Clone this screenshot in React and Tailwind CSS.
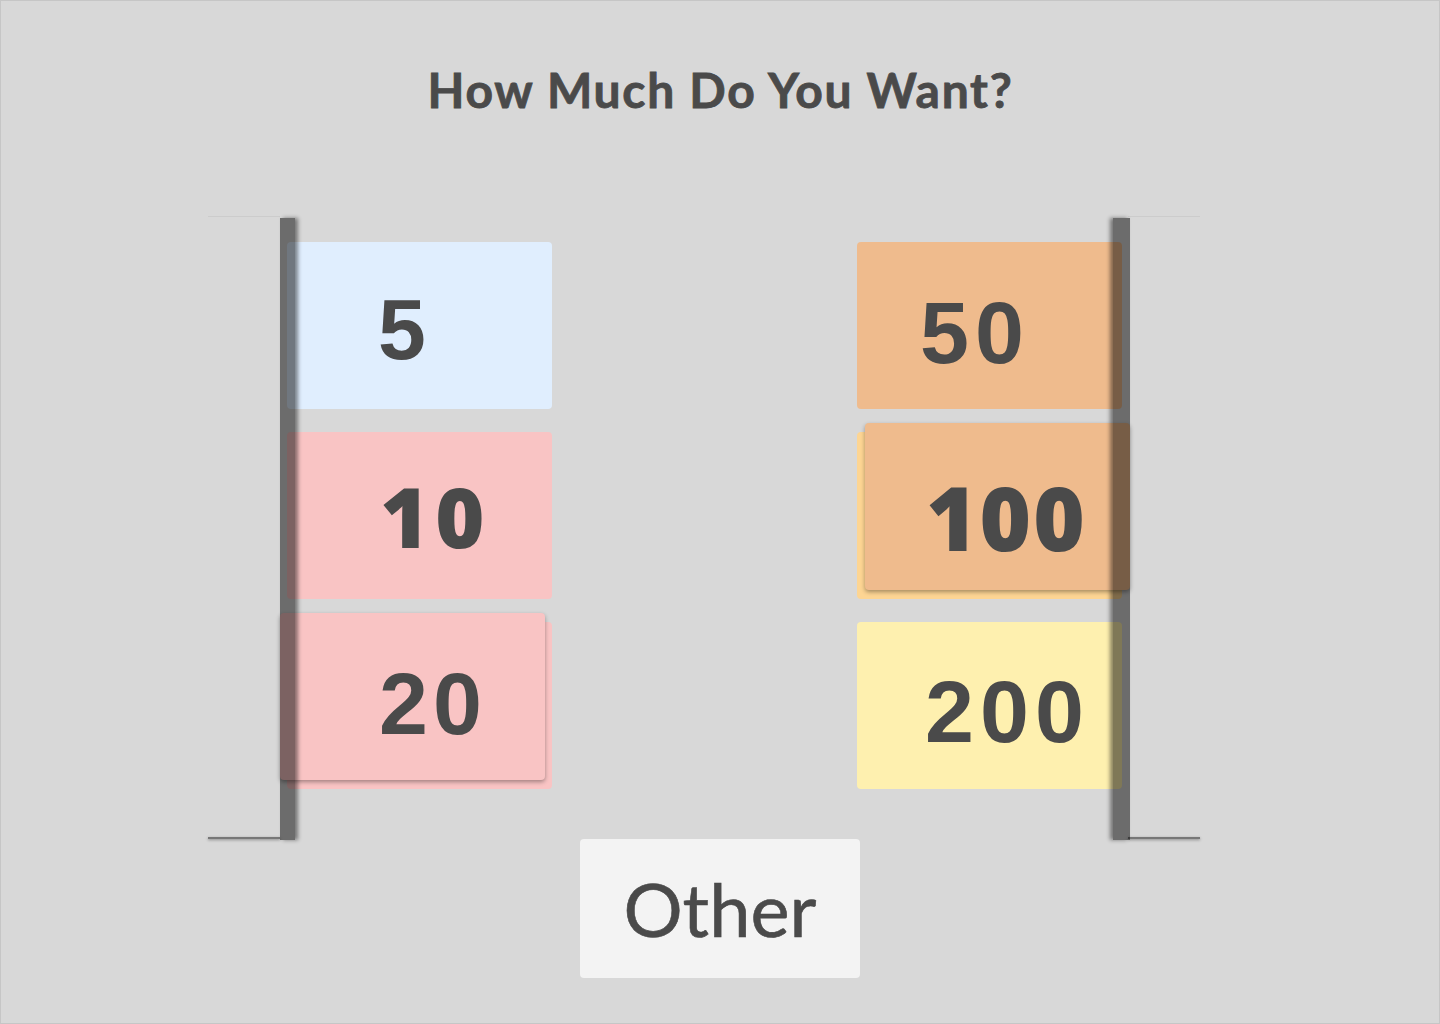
import React from "react";

const arial = { fontFamily: "'Liberation Sans', Arial, sans-serif" };
const open = { fontFamily: "'Open Sans', 'Noto Sans', sans-serif" };

const Card = ({ label, bg, textClass, lifted, backBg, liftClass, font }) => {
  const text = (
    <span className={`leading-none text-[#4a4a4a] ${textClass}`} style={font}>
      {label}
    </span>
  );
  if (!lifted) {
    return <div className={`flex h-[167px] w-[265px] items-center rounded-[4px] ${bg}`}>{text}</div>;
  }
  return (
    <div className={`relative h-[167px] w-[265px] rounded-[4px] ${backBg}`}>
      <div
        className={`absolute flex h-[167px] w-[265px] items-center rounded-[4px] ${bg} ${liftClass} shadow-[0_2px_4px_rgba(0,0,0,0.35)]`}
      >
        {text}
      </div>
    </div>
  );
};

const Rack = ({ side, children }) => {
  const left = side === "left";
  return (
    <div className={`relative h-[624px] ${left ? "w-[344px]" : "w-[343px]"}`}>
      {/* shelf lines */}
      <div className={`absolute top-0 h-px w-[72px] bg-[#cccccc] ${left ? "left-0" : "right-0"}`} />
      <div
        className={`absolute bottom-[1px] h-[2px] w-[72px] bg-[#777777] shadow-[0_1px_3px_rgba(0,0,0,0.4)] ${
          left ? "left-0" : "right-0"
        }`}
      />
      <div className={`flex flex-col gap-[23px] pt-[26px] ${left ? "pl-[79px]" : "pl-0"}`}>{children}</div>
      {/* vertical bar over the cards */}
      <div
        className={`absolute top-[2px] bottom-0 z-10 bg-black/50 ${
          left
            ? "left-[72px] w-[15px] shadow-[3px_0_4px_rgba(0,0,0,0.45)]"
            : "left-[256px] w-[17px] shadow-[-3px_0_4px_rgba(0,0,0,0.45)]"
        }`}
      />
    </div>
  );
};

export default function App() {
  return (
    <div className="flex h-[1024px] w-[1440px] flex-col border border-[#c6c6c6] bg-[#d8d8d8]">
      <h1
        className="mt-[60px] self-center pl-[1px] text-[48px] font-bold leading-[58px] tracking-[1.7px] text-[#4a4a4a] [-webkit-text-stroke:0.8px_#4a4a4a]"
        style={{ fontFamily: "Lato, 'Noto Sans', sans-serif" }}
      >
        How Much Do You Want?
      </h1>

      <div className="ml-[207px] mt-[97px] flex w-[992px] justify-between">
        <Rack side="left">
          <Card
            label="5"
            bg="bg-[#e0eefe]"
            font={arial}
            textClass="ml-[91px] mt-[6px] text-[86px] font-bold"
          />
          <Card
            label="10"
            bg="bg-[#f9c4c4]"
            font={open}
            textClass="ml-[93px] mt-[0px] text-[84px] font-extrabold tracking-[6px]"
          />
          <Card
            label="20"
            lifted
            bg="bg-[#f9c4c4]"
            backBg="bg-[#f9c4c4]"
            liftClass="-left-[7px] -top-[9px]"
            font={arial}
            textClass="ml-[99px] mt-[14px] text-[88px] font-bold tracking-[5px]"
          />
        </Rack>
        <Rack side="right">
          <Card
            label="50"
            bg="bg-[#efbb8d]"
            font={arial}
            textClass="ml-[63px] mt-[14px] text-[88px] font-bold tracking-[6px]"
          />
          <Card
            label="100"
            lifted
            bg="bg-[#efbb8d]"
            backBg="bg-[#fdd593]"
            liftClass="left-[8px] -top-[9px]"
            font={open}
            textClass="ml-[61px] mt-[20px] text-[88px] font-extrabold tracking-[2px]"
          />
          <Card
            label="200"
            bg="bg-[#fef0af]"
            font={arial}
            textClass="ml-[68px] mt-[12px] text-[88px] font-bold tracking-[6px]"
          />
        </Rack>
      </div>

      <button
        className="mt-[-1px] flex h-[139px] w-[280px] items-center justify-center self-center rounded-[4px] bg-[#f3f3f3] text-[74px] leading-none text-[#4a4a4a] [-webkit-text-stroke:0.6px_#4a4a4a]"
        style={{ fontFamily: "Lato, 'Noto Sans', sans-serif" }}
      >
        Other
      </button>
    </div>
  );
}
